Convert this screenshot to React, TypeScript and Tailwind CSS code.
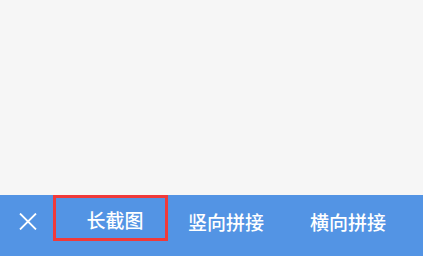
export default function App() {
  const font = { fontFamily: "'Noto Sans CJK SC', 'Noto Sans', sans-serif" }
  return (
    <div className="flex h-[256px] w-[423px] flex-col bg-[#f6f6f6]" style={font}>
      <div className="flex-1" />
      <div className="flex h-[61px] items-start bg-[#5394e4] text-[19px] font-medium text-white">
        <button className="flex h-[46px] w-[53px] items-center justify-center pt-[6px] pl-[2px]">
          <svg width="18" height="17" viewBox="0 0 18 17" fill="none" stroke="white" strokeWidth="1.8">
            <path d="M1 0.5 L17 16.5 M17 0.5 L1 16.5" />
          </svg>
        </button>
        <div className="flex h-[46px] w-[115px] items-center justify-center border-[3px] border-[#f03a3a] pt-[3px] pl-[9px] leading-none">
          长截图
        </div>
        <div className="flex h-[46px] items-center pl-[20px] pt-[6px] leading-none">竖向拼接</div>
        <div className="flex h-[46px] items-center pl-[46px] pt-[6px] leading-none">横向拼接</div>
      </div>
    </div>
  )
}
